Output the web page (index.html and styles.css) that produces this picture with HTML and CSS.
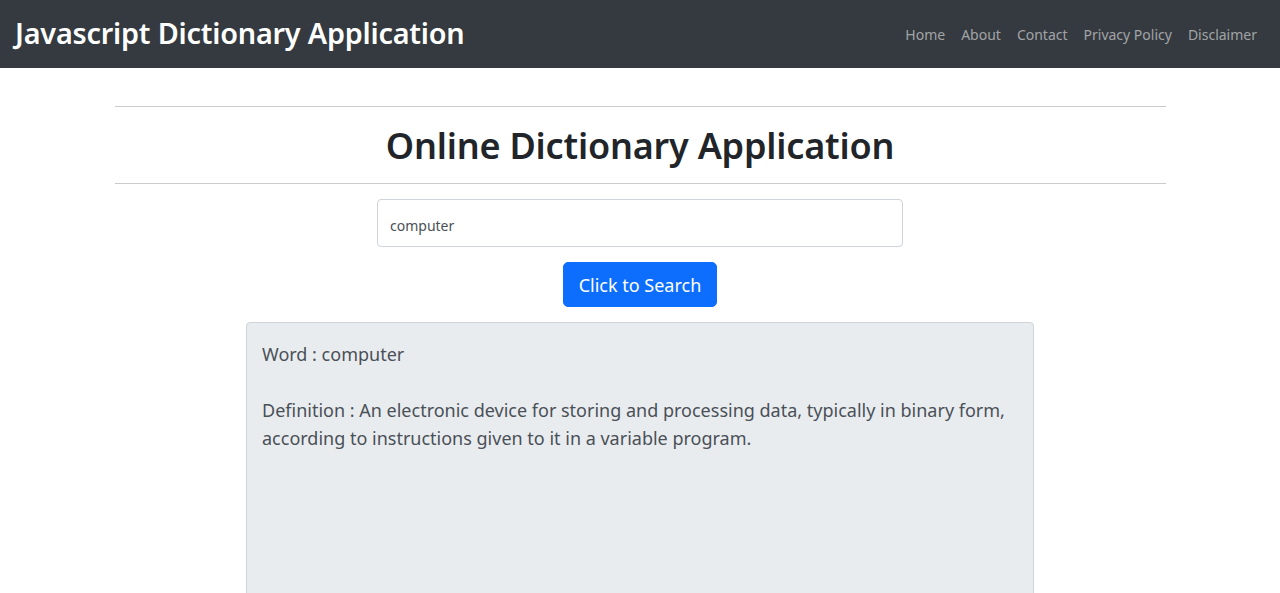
FILE: index.html
```html
<!DOCTYPE html>
<html lang="en">
<head>
<meta charset="utf-8">
<title>Javascript Dictionary Application</title>
<link rel="stylesheet" href="styles.css">
</head>
<body>
<nav class="navbar">
  <a class="brand" href="#">Javascript Dictionary Application</a>
  <ul class="nav">
    <li><a href="#">Home</a></li>
    <li><a href="#">About</a></li>
    <li><a href="#">Contact</a></li>
    <li><a href="#">Privacy Policy</a></li>
    <li><a href="#">Disclaimer</a></li>
  </ul>
</nav>
<main class="main">
  <hr class="rule rule-top">
  <h1 class="title">Online Dictionary Application</h1>
  <hr class="rule">
  <div class="search">
    <input class="field" type="text" value="computer">
    <button class="btn" type="button">Click to Search</button>
  </div>
  <div class="result">
    <p class="line">Word : computer</p>
    <p class="line gap">Definition : An electronic device for storing and processing data, typically in binary form, according to instructions given to it in a variable program.</p>
  </div>
</main>
</body>
</html>
```
FILE: styles.css
```css
* { box-sizing: border-box; }
html, body { margin: 0; padding: 0; }
body {
  font-family: "Noto Sans", "Open Sans", Arial, sans-serif;
  color: #212529;
  background: #fff;
  height: 593px;
  overflow: hidden;
}
.navbar {
  height: 68px;
  background: #343a40;
  display: flex;
  align-items: center;
  justify-content: space-between;
  padding: 0 15px;
}
.brand {
  color: #fff;
  text-decoration: none;
  font-size: 28.8px;
  font-weight: 600;
  letter-spacing: -0.2px;
  margin-top: -4px;
}
.nav {
  list-style: none;
  margin: 0;
  padding: 0;
  display: flex;
}
.nav a {
  display: block;
  padding: 8px 8px;
  color: rgba(255,255,255,.55);
  text-decoration: none;
  font-size: 14px;
}
.main {
  width: 1051px;
  margin: 0 auto;
  display: flex;
  flex-direction: column;
  align-items: center;
}
.rule {
  width: 100%;
  margin: 0;
  border: 0;
  border-top: 1px solid #cbcbcb;
}
.rule-top { margin-top: 38px; }
.title {
  margin: 0;
  height: 76px;
  display: flex;
  align-items: center;
  font-size: 36px;
  font-weight: 600;
  letter-spacing: -0.2px;
  color: #212529;
}
.search {
  margin-top: 15px;
  display: flex;
  flex-direction: column;
  align-items: center;
}
.field {
  width: 526px;
  height: 48px;
  padding: 8px 12px 4px;
  border: 1px solid #ced4da;
  border-radius: 4px;
  font-family: inherit;
  font-size: 14px;
  color: #495057;
  background: #fff;
}
.btn {
  margin-top: 15px;
  width: 154px;
  height: 45px;
  background: #0d6efd;
  border: 1px solid #0d6efd;
  border-radius: 5px;
  color: #fff;
  font-family: inherit;
  font-size: 18px;
  padding: 0;
}
.result {
  margin-top: 15px;
  width: 788px;
  height: 300px;
  background: #e9ecef;
  border: 1px solid #ced4da;
  border-radius: 4px;
  padding: 17px 15px;
  color: #495057;
  font-size: 18px;
  line-height: 28px;
}
.line { margin: 0; }
.gap { margin-top: 28px; }
```
